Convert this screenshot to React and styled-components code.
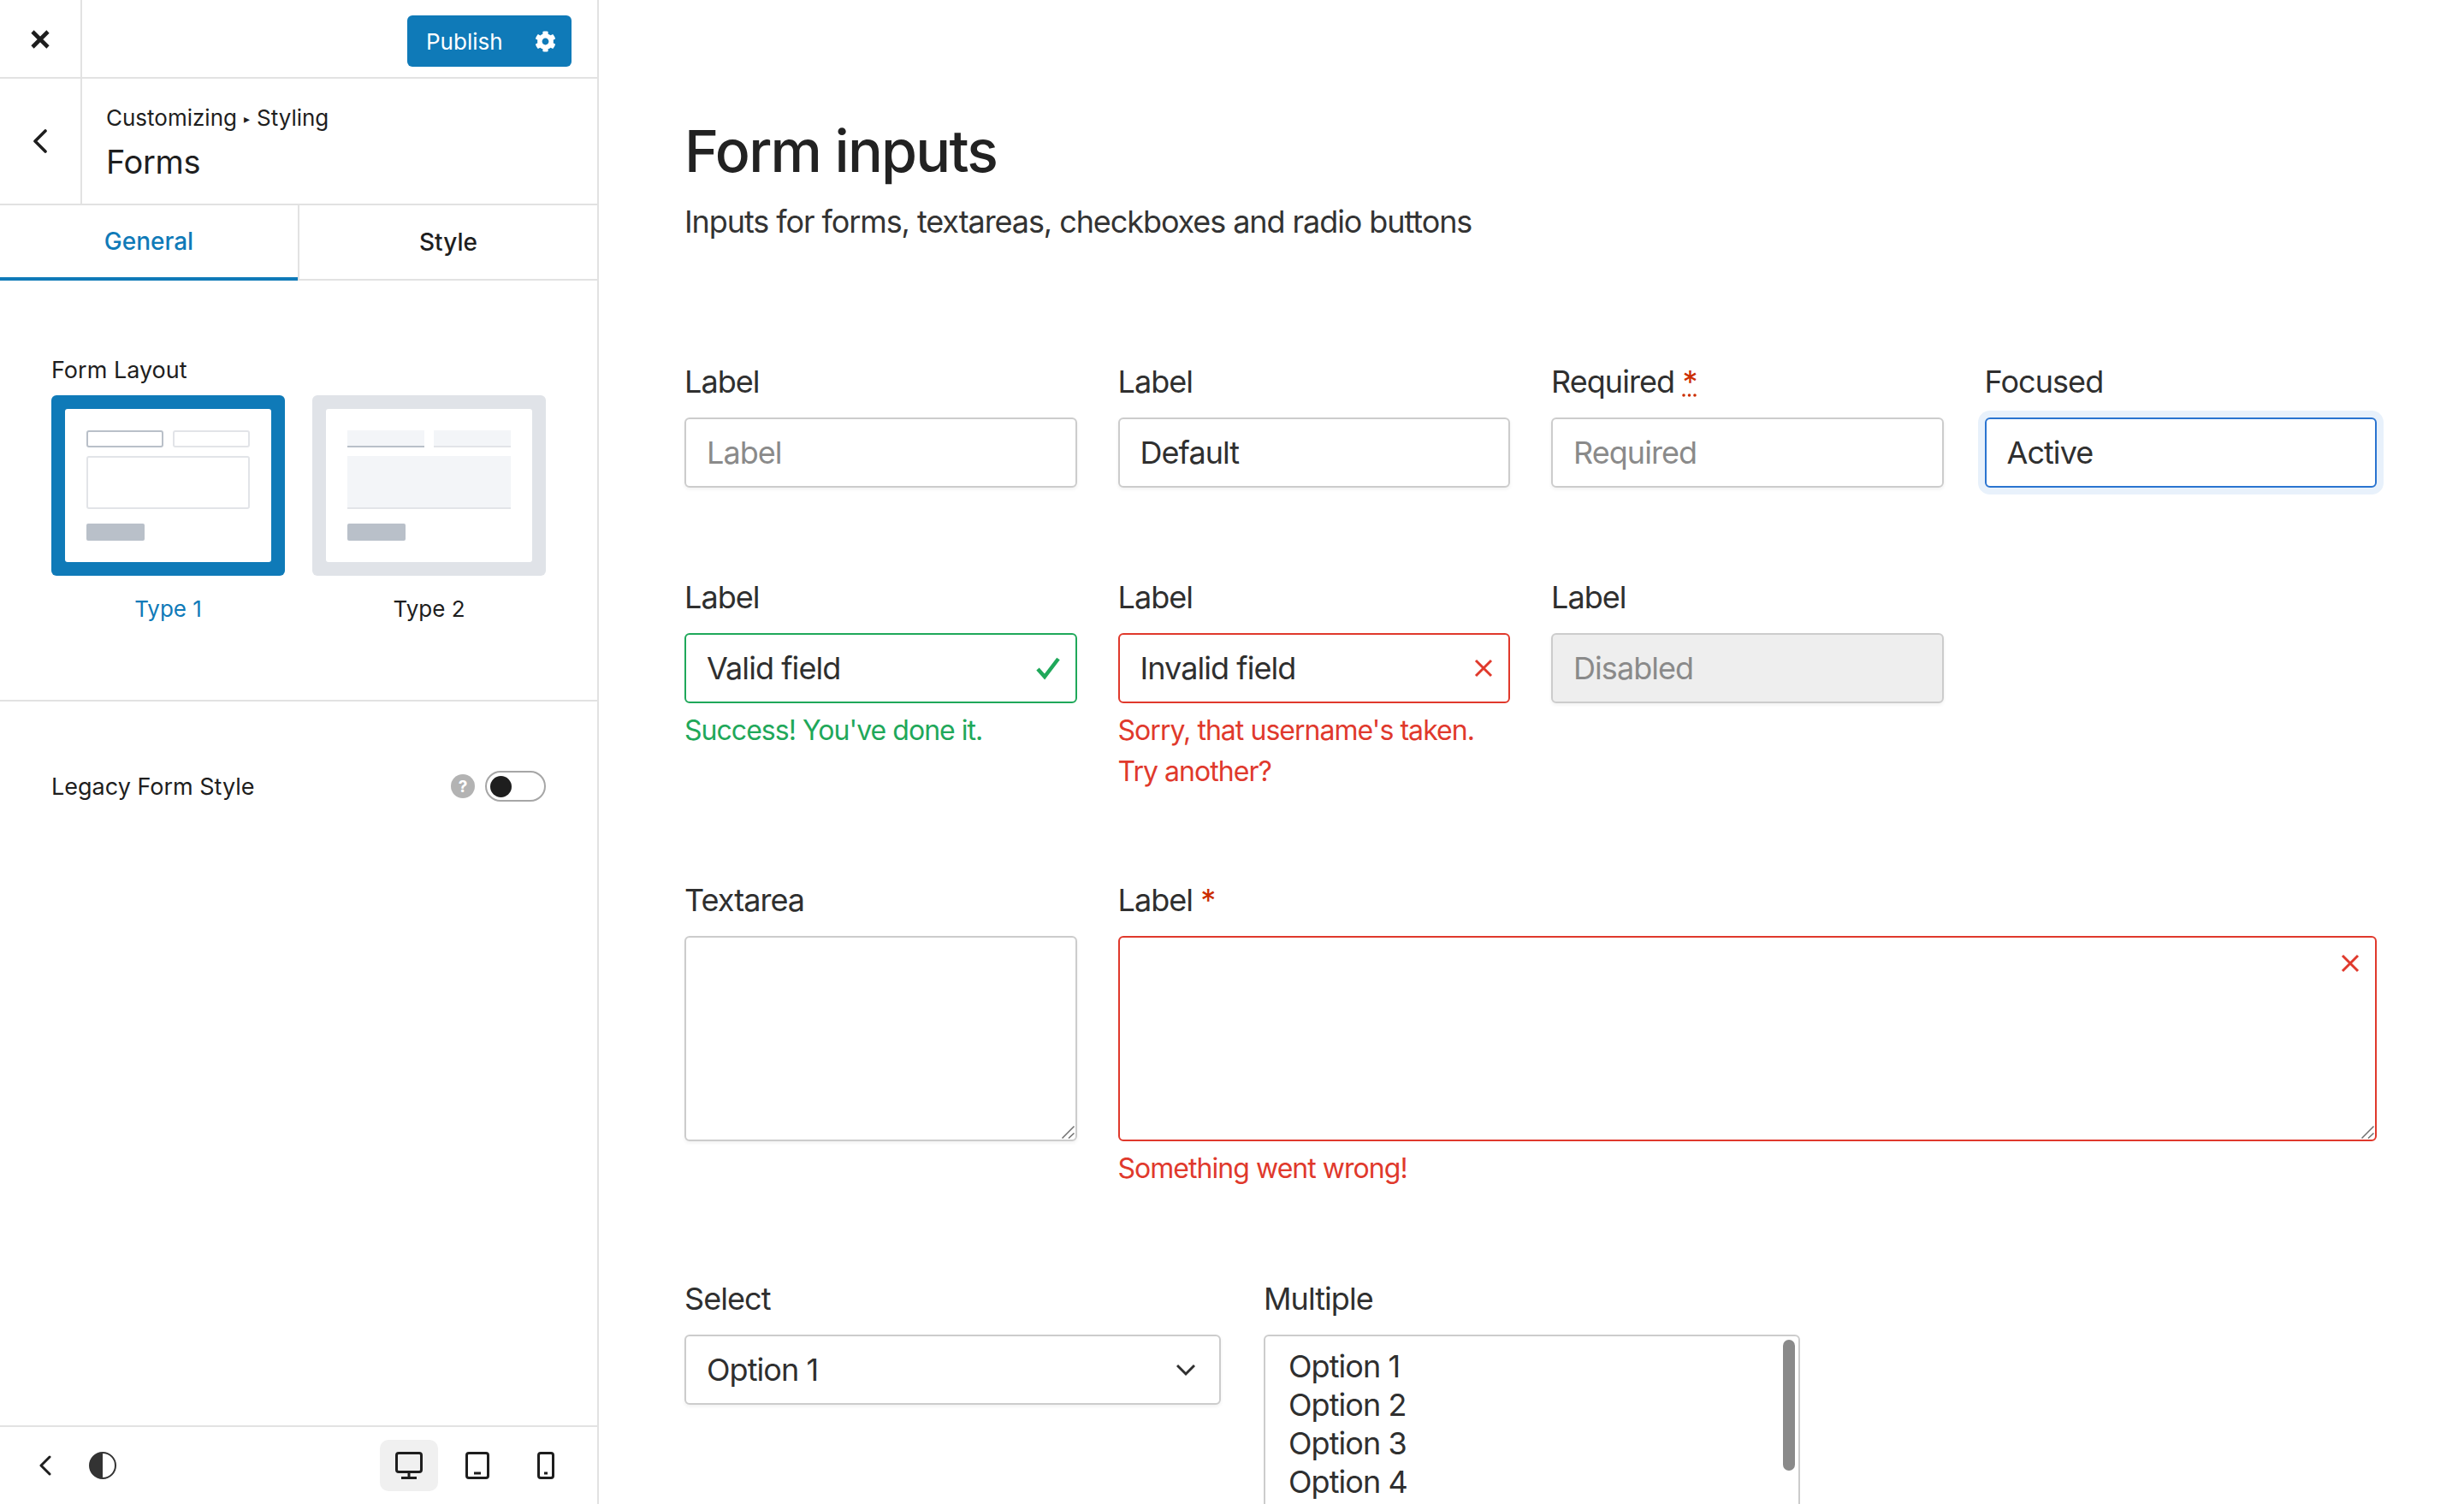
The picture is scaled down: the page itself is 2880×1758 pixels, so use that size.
import React from 'react'
import styled, { createGlobalStyle } from 'styled-components'
import { FaCog } from 'react-icons/fa'

const GlobalStyle = createGlobalStyle`
  html, body { margin: 0; padding: 0; background: #fff; }
  body { font-family: Inter, 'Noto Sans', sans-serif; color: #1e1e1e; }
  * { box-sizing: border-box; }
`

const BLUE = '#0f7ab8'
const GREEN = '#1fa85a'
const RED = '#e0392c'
const LINE = '#e2e2e2'
const TIGHT = '-0.026em'
const TIGHTER = '-0.03em'

const Page = styled.div`
  display: flex;
  width: 2880px;
  height: 1758px;
  overflow: hidden;
`

const Sidebar = styled.aside`
  display: flex;
  flex-direction: column;
  flex: none;
  width: 700px;
  border-right: 2px solid ${LINE};
`

const TopBar = styled.div`
  display: flex;
  flex: none;
  height: 92px;
  border-bottom: 2px solid ${LINE};
`

const SideCell = styled.div`
  display: flex;
  align-items: center;
  justify-content: center;
  flex: none;
  width: 96px;
  border-right: 2px solid ${LINE};
`

const TopActions = styled.div`
  display: flex;
  align-items: flex-start;
  justify-content: flex-end;
  flex: 1;
  padding: 18px 30px 0 0;
`

const PublishButton = styled.button`
  display: flex;
  align-items: center;
  justify-content: space-between;
  width: 192px;
  height: 60px;
  padding: 0 18px 0 22px;
  border: 0;
  border-radius: 6px;
  background: ${BLUE};
  color: #fff;
  font: 400 26px Inter, sans-serif;
`

const SectionHeader = styled.div`
  display: flex;
  flex: none;
  height: 148px;
  border-bottom: 2px solid ${LINE};
`

const SectionTitles = styled.div`
  padding: 28px 0 0 28px;
`

const Breadcrumb = styled.div`
  font-size: 26px;
  line-height: 36px;
`

const Arrow = styled.span`
  display: inline-block;
  margin: 0 8px;
  font-size: 14px;
  vertical-align: 3px;
`

const SectionName = styled.div`
  margin-top: 5px;
  font-size: 38px;
  letter-spacing: -0.01em;
  line-height: 54px;
`

const Tabs = styled.div`
  display: grid;
  grid-template-columns: 348px 1fr;
  flex: none;
  height: 88px;
`

const Tab = styled.div`
  display: flex;
  align-items: center;
  justify-content: center;
  border-bottom: ${p => (p.$active ? `4px solid ${BLUE}` : `2px solid ${LINE}`)};
  border-left: ${p => (p.$active ? '0' : `2px solid ${LINE}`)};
  color: ${p => (p.$active ? BLUE : '#1e1e1e')};
  font-size: 28px;
  font-weight: 500;
`

const LayoutSection = styled.section`
  flex: none;
  height: 492px;
  padding: 87px 60px 0;
  border-bottom: 2px solid ${LINE};
`

const ControlTitle = styled.div`
  font-size: 27px;
  line-height: 36px;
`

const LayoutChoices = styled.div`
  display: grid;
  grid-template-columns: 273px 273px;
  justify-content: space-between;
  margin-top: 11px;
`

const LayoutChoice = styled.div`
  color: ${p => (p.$active ? BLUE : '#1e1e1e')};
  font-size: 26px;
  line-height: 36px;
  text-align: center;
`

const Thumb = styled.svg`
  display: block;
  width: 273px;
  height: 211px;
  margin-bottom: 21px;
`

const ToggleRow = styled.div`
  display: flex;
  align-items: center;
  margin: 81px 60px 0;
  height: 36px;
  font-size: 27px;
`

const ToggleLabel = styled.span`
  flex: 1;
`

const HelpDot = styled.span`
  display: flex;
  align-items: center;
  justify-content: center;
  width: 28px;
  height: 28px;
  margin-right: 12px;
  border-radius: 50%;
  background: #b3b3b3;
  color: #fff;
  font-size: 19px;
  font-weight: 700;
`

const Toggle = styled.span`
  display: flex;
  align-items: center;
  width: 71px;
  height: 36px;
  padding-left: 4px;
  border: 2px solid #a6a6a6;
  border-radius: 18px;
`

const ToggleKnob = styled.span`
  width: 25px;
  height: 25px;
  border-radius: 50%;
  background: #1e1e1e;
`

const BottomBar = styled.div`
  display: flex;
  align-items: center;
  flex: none;
  height: 92px;
  margin-top: auto;
  padding: 0 26px 0 46px;
  border-top: 2px solid ${LINE};
`

const BackIcon = styled.svg`
  width: 14px;
  height: 24px;
  margin-right: 44px;
`

const Spacer = styled.div`
  flex: 1;
`

const DeviceButton = styled.div`
  display: flex;
  align-items: center;
  justify-content: center;
  width: ${p => p.$width}px;
  height: 60px;
  border-radius: 10px;
  background: ${p => (p.$active ? '#f0f0f0' : 'transparent')};
`

const Main = styled.main`
  flex: 1;
  min-width: 0;
  padding: 0 102px 0 100px;
`

const PageTitle = styled.h1`
  margin: 128px 0 0;
  color: #222;
  font-size: 68px;
  font-weight: 500;
  letter-spacing: ${TIGHT};
  line-height: 96px;
`

const PageIntro = styled.p`
  margin: 11px 0 0;
  color: #333;
  font-size: 36px;
  letter-spacing: ${TIGHTER};
  line-height: 48px;
`

const Rows = styled.div`
  display: flex;
  flex-direction: column;
  margin-top: 139px;
`

const Row = styled.div`
  display: grid;
  grid-template-columns: ${p => p.$columns || 'repeat(4, 1fr)'};
  column-gap: ${p => (p.$columns ? 50 : 48)}px;
  margin-bottom: ${p => p.$gap || 104}px;
`

const Field = styled.div`
  grid-column: ${p => p.$span || 'auto'};
  min-width: 0;
`

const Label = styled.label`
  display: block;
  margin-bottom: 18px;
  color: #2f2f2f;
  font-size: 36px;
  letter-spacing: ${TIGHT};
  line-height: 48px;
`

const RequiredMark = styled.abbr`
  color: #cc2e00;
  text-decoration: ${p => (p.$dotted ? 'underline dotted' : 'none')};
`

const Control = styled.div`
  position: relative;
  height: ${p => p.$height || 82}px;
`

const borderColor = p => ({ valid: GREEN, invalid: RED, focused: '#2a74d0' }[p.$state] || '#ccc')

const ringShadow = p => {
  if (p.$state === 'focused') return '0 0 0 8px #e8f1fb'
  if (p.$state === 'valid' || p.$state === 'invalid') return 'none'
  return '0 2px 4px rgba(0, 0, 0, 0.06)'
}

const Input = styled.input`
  display: block;
  width: 100%;
  height: 100%;
  padding: 0 24px;
  border: 2px solid ${borderColor};
  border-radius: 6px;
  outline: 0;
  background: ${p => (p.disabled ? '#eee' : '#fff')};
  box-shadow: ${ringShadow};
  color: ${p => (p.disabled ? '#8a8a8a' : '#2f2f2f')};
  font: 400 36px Inter, sans-serif;
  letter-spacing: ${TIGHT};
  opacity: 1;

  &::placeholder {
    color: #8a8a8a;
    opacity: 1;
  }
`

const TextArea = styled.textarea`
  display: block;
  width: 100%;
  height: 100%;
  padding: 24px;
  border: 2px solid ${borderColor};
  border-radius: 6px;
  outline: 0;
  resize: none;
  background: #fff;
  box-shadow: ${ringShadow};
  font: 400 36px Inter, sans-serif;
`

const Select = styled.select`
  display: block;
  width: 100%;
  height: 100%;
  padding: 0 24px;
  border: 2px solid #ccc;
  border-radius: 6px;
  outline: 0;
  appearance: none;
  background: #fff;
  box-shadow: 0 2px 4px rgba(0, 0, 0, 0.06);
  color: #2f2f2f;
  font: 400 36px Inter, sans-serif;
  letter-spacing: ${TIGHT};
`

const Listbox = styled.div`
  position: relative;
  height: 320px;
  padding: 13px 27px;
  border: 2px solid #ccc;
  border-radius: 6px;
  color: #2f2f2f;
  font-size: 36px;
  letter-spacing: ${TIGHT};
  line-height: 45px;
`

const ScrollThumb = styled.div`
  position: absolute;
  top: 4px;
  right: 4px;
  width: 14px;
  height: 153px;
  border-radius: 7px;
  background: #8a8a8a;
`

const StateIcon = styled.svg`
  position: absolute;
  top: ${p => p.$top}px;
  right: ${p => p.$right}px;
  width: ${p => p.$size}px;
  height: ${p => p.$size}px;
  pointer-events: none;
`

const Feedback = styled.div`
  margin-top: 8px;
  color: ${p => (p.$error ? RED : GREEN)};
  font-size: 32px;
  letter-spacing: ${TIGHTER};
  line-height: 48px;
`

const CloseIcon = () => (
  <svg width='24' height='24' viewBox='0 0 24 24' fill='none' stroke='#1e1e1e' strokeWidth='4.6'>
    <path d='M3 4l18 18M21 4L3 22' />
  </svg>
)

const Chevron = () => (
  <svg width='18' height='28' viewBox='0 0 18 28' fill='none' stroke='#1e1e1e' strokeWidth='3.6' strokeLinecap='round' strokeLinejoin='round'>
    <path d='M15 2L3 14l12 12' />
  </svg>
)

const LayoutThumb = ({ active, flat }) => {
  const frame = active ? BLUE : '#e0e3e8'
  return (
    <Thumb viewBox='0 0 273 211'>
      <rect width='273' height='211' rx='6' fill={frame} />
      <rect x='16' y='16' width='241' height='179' rx='3' fill='#fff' />
      {flat ? (
        <>
          <rect x='41' y='41' width='90' height='20' fill='#f3f5f8' />
          <rect x='41' y='59' width='90' height='2' fill='#b9c0c9' />
          <rect x='142' y='41' width='90' height='20' fill='#f3f5f8' />
          <rect x='142' y='59' width='90' height='2' fill='#e2e4e8' />
          <rect x='41' y='71' width='191' height='62' fill='#f3f5f8' />
          <rect x='41' y='131' width='191' height='2' fill='#e2e4e8' />
        </>
      ) : (
        <>
          <rect x='42' y='42' width='88' height='18' rx='2' fill='none' stroke='#b9c0c9' strokeWidth='2' />
          <rect x='143' y='42' width='88' height='18' rx='2' fill='none' stroke='#e2e4e8' strokeWidth='2' />
          <rect x='42' y='72' width='189' height='60' rx='2' fill='none' stroke='#e2e4e8' strokeWidth='2' />
        </>
      )}
      <rect x='41' y='150' width='68' height='20' rx='2' fill='#b9c0c9' />
    </Thumb>
  )
}

const CheckMark = () => (
  <StateIcon $top={28} $right={20} $size={28} viewBox='0 0 28 28' fill='none' stroke={GREEN} strokeWidth='4.5'>
    <path d='M2 14l8 9L26 2' />
  </StateIcon>
)

const CrossMark = ({ top = 30 }) => (
  <StateIcon $top={top} $right={20} $size={22} viewBox='0 0 22 22' fill='none' stroke={RED} strokeWidth='3'>
    <path d='M2 2l18 18M20 2L2 20' />
  </StateIcon>
)

const ResizeGrip = () => (
  <StateIcon $top={222} $right={3} $size={15} viewBox='0 0 15 15' fill='none' stroke='#6f6f6f' strokeWidth='1.5'>
    <path d='M0.5 14.5L14.5 0.5M8 14.5l6.5-6' />
  </StateIcon>
)

const App = () => (
  <Page>
    <GlobalStyle />
    <Sidebar>
      <TopBar>
        <SideCell><CloseIcon /></SideCell>
        <TopActions>
          <PublishButton>Publish<FaCog size={25} /></PublishButton>
        </TopActions>
      </TopBar>
      <SectionHeader>
        <SideCell><Chevron /></SideCell>
        <SectionTitles>
          <Breadcrumb>Customizing<Arrow>▸</Arrow>Styling</Breadcrumb>
          <SectionName>Forms</SectionName>
        </SectionTitles>
      </SectionHeader>
      <Tabs>
        <Tab $active>General</Tab>
        <Tab>Style</Tab>
      </Tabs>
      <LayoutSection>
        <ControlTitle>Form Layout</ControlTitle>
        <LayoutChoices>
          <LayoutChoice $active><LayoutThumb active />Type 1</LayoutChoice>
          <LayoutChoice><LayoutThumb flat />Type 2</LayoutChoice>
        </LayoutChoices>
      </LayoutSection>
      <ToggleRow>
        <ToggleLabel>Legacy Form Style</ToggleLabel>
        <HelpDot>?</HelpDot>
        <Toggle><ToggleKnob /></Toggle>
      </ToggleRow>
      <BottomBar>
        <BackIcon viewBox='0 0 14 24' fill='none' stroke='#1e1e1e' strokeWidth='3' strokeLinecap='round' strokeLinejoin='round'>
          <path d='M12 2L2 12l10 10' />
        </BackIcon>
        <svg width='32' height='32' viewBox='0 0 32 32'>
          <circle cx='16' cy='16' r='15' fill='#fff' stroke='#333' strokeWidth='2' />
          <path d='M16 1a15 15 0 0 0 0 30z' fill='#333' />
        </svg>
        <Spacer />
        <DeviceButton $active $width={68}>
          <svg width='32' height='32' viewBox='0 0 32 32' fill='none' stroke='#1e1e1e' strokeWidth='3'>
            <rect x='1.5' y='1.5' width='29' height='22' rx='2.5' />
            <path d='M16 24v5M7 30.5h18' />
          </svg>
        </DeviceButton>
        <DeviceButton $width={92}>
          <svg width='28' height='32' viewBox='0 0 28 32' fill='none' stroke='#1e1e1e' strokeWidth='3'>
            <rect x='1.5' y='1.5' width='25' height='29' rx='2.5' />
            <path d='M10 25h8' />
          </svg>
        </DeviceButton>
        <DeviceButton $width={68}>
          <svg width='20' height='32' viewBox='0 0 20 32' fill='none' stroke='#1e1e1e' strokeWidth='3'>
            <rect x='1.5' y='1.5' width='17' height='29' rx='2.5' />
            <path d='M8 25h4' />
          </svg>
        </DeviceButton>
      </BottomBar>
    </Sidebar>
    <Main>
      <PageTitle>Form inputs</PageTitle>
      <PageIntro>Inputs for forms, textareas, checkboxes and radio buttons</PageIntro>
      <Rows>
        <Row>
          <Field>
            <Label>Label</Label>
            <Control><Input placeholder='Label' /></Control>
          </Field>
          <Field>
            <Label>Label</Label>
            <Control><Input defaultValue='Default' /></Control>
          </Field>
          <Field>
            <Label>Required <RequiredMark $dotted title='required'>*</RequiredMark></Label>
            <Control><Input placeholder='Required' /></Control>
          </Field>
          <Field>
            <Label>Focused</Label>
            <Control><Input $state='focused' defaultValue='Active' /></Control>
          </Field>
        </Row>
        <Row $gap={102}>
          <Field>
            <Label>Label</Label>
            <Control>
              <Input $state='valid' defaultValue='Valid field' />
              <CheckMark />
            </Control>
            <Feedback>Success! You've done it.</Feedback>
          </Field>
          <Field>
            <Label>Label</Label>
            <Control>
              <Input $state='invalid' defaultValue='Invalid field' />
              <CrossMark />
            </Control>
            <Feedback $error>Sorry, that username's taken.<br />Try another?</Feedback>
          </Field>
          <Field>
            <Label>Label</Label>
            <Control><Input disabled defaultValue='Disabled' /></Control>
          </Field>
        </Row>
        <Row>
          <Field>
            <Label>Textarea</Label>
            <Control $height={240}>
              <TextArea />
              <ResizeGrip />
            </Control>
          </Field>
          <Field $span='span 3'>
            <Label>Label <RequiredMark>*</RequiredMark></Label>
            <Control $height={240}>
              <TextArea $state='invalid' />
              <CrossMark top={21} />
              <ResizeGrip />
            </Control>
            <Feedback $error>Something went wrong!</Feedback>
          </Field>
        </Row>
        <Row $columns='627px 627px'>
          <Field>
            <Label>Select</Label>
            <Control>
              <Select defaultValue='Option 1'>
                <option>Option 1</option>
                <option>Option 2</option>
              </Select>
              <StateIcon $top={30} $right={30} $size={22} viewBox='0 0 22 22' fill='none' stroke='#2f2f2f' strokeWidth='3'>
                <path d='M1 6l10 10L21 6' />
              </StateIcon>
            </Control>
          </Field>
          <Field>
            <Label>Multiple</Label>
            <Listbox>
              <div>Option 1</div>
              <div>Option 2</div>
              <div>Option 3</div>
              <div>Option 4</div>
              <ScrollThumb />
            </Listbox>
          </Field>
        </Row>
      </Rows>
    </Main>
  </Page>
)

export default App
